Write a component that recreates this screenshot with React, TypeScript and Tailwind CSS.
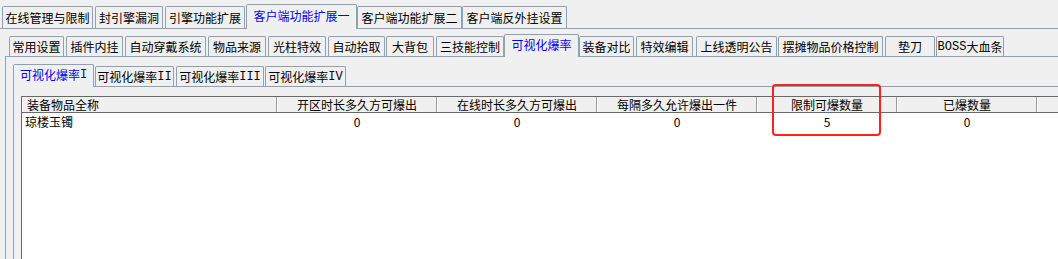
import React from "react";

const B = "border-[#8da1b3]";

type T = { label: React.ReactNode; key: string; w: number; ml: number; active?: boolean };

const Lat = ({ children }: { children: React.ReactNode }) => (
  <span className="text-[12px]" style={{ fontFamily: '"Liberation Mono", monospace' }}>
    {children}
  </span>
);

const row1: T[] = [
  { key: "a", label: "在线管理与限制", w: 91, ml: 2 },
  { key: "b", label: "封引擎漏洞", w: 68, ml: 2 },
  { key: "c", label: "引擎功能扩展", w: 80, ml: 2 },
  { key: "d", label: "客户端功能扩展一", w: 111, ml: 1, active: true },
  { key: "e", label: "客户端功能扩展二", w: 105, ml: 0 },
  { key: "f", label: "客户端反外挂设置", w: 105, ml: 0 },
];

const row2: T[] = [
  { key: "1", label: "常用设置", w: 55, ml: 4 },
  { key: "2", label: "插件内挂", w: 57, ml: 2 },
  { key: "3", label: "自动穿戴系统", w: 81, ml: 2 },
  { key: "4", label: "物品来源", w: 58, ml: 2 },
  { key: "5", label: "光柱特效", w: 58, ml: 2 },
  { key: "6", label: "自动拾取", w: 57, ml: 2 },
  { key: "7", label: "大背包", w: 48, ml: 1 },
  { key: "8", label: "三技能控制", w: 68, ml: 2 },
  { key: "9", label: "可视化爆率", w: 75, ml: 0, active: true },
  { key: "10", label: "装备对比", w: 55, ml: 0 },
  { key: "11", label: "特效编辑", w: 57, ml: 2 },
  { key: "12", label: "上线透明公告", w: 81, ml: 3 },
  { key: "13", label: "摆摊物品价格控制", w: 105, ml: 1 },
  { key: "14", label: "垫刀", w: 50, ml: 2 },
  {
    key: "15",
    label: (
      <>
        <Lat>BOSS</Lat>大血条
      </>
    ),
    w: 68,
    ml: 1,
  },
];

const row3: T[] = [
  { key: "r1", label: <>可视化爆率<Lat>I</Lat></>, w: 81, ml: 0, active: true },
  { key: "r2", label: <>可视化爆率<Lat>II</Lat></>, w: 79, ml: 1 },
  { key: "r3", label: <>可视化爆率<Lat>III</Lat></>, w: 88, ml: 2 },
  { key: "r4", label: <>可视化爆率<Lat>IV</Lat></>, w: 81, ml: 1 },
];

function Tab({ t, h }: { t: T; h: number }) {
  if (t.active) {
    return (
      <div
        style={{ width: t.w, marginLeft: t.ml, height: h + 3 }}
        className={`relative z-10 -mb-px flex shrink-0 items-center justify-center whitespace-nowrap rounded-t-[2px] border border-b-0 ${B} bg-[#f0f0f0] pb-[2px] text-[#0000ff]`}
      >
        {t.label}
      </div>
    );
  }
  return (
    <div
      style={{ width: t.w, marginLeft: t.ml, height: h }}
      className={`flex shrink-0 items-center justify-center whitespace-nowrap rounded-t-[2px] border border-b-0 ${B} bg-[#f0f0f0] text-black`}
    >
      {t.label}
    </div>
  );
}

const cols = [
  { label: "装备物品全称", w: 255, left: true, v: "琼楼玉镯" },
  { label: "开区时长多久方可爆出", w: 160, v: "0" },
  { label: "在线时长多久方可爆出", w: 160, v: "0" },
  { label: "每隔多久允许爆出一件", w: 160, v: "0" },
  { label: "限制可爆数量", w: 140, v: "5" },
  { label: "已爆数量", w: 140, v: "0" },
  { label: "", w: 40, v: "" },
];

export default function App() {
  return (
    <div
      className="relative flex h-[259px] w-[1058px] flex-col overflow-hidden bg-[#f0f0f0] text-[12px] leading-[14px] text-black"
      style={{ fontFamily: '"Noto Sans CJK SC", "Noto Sans", sans-serif' }}
    >
      {/* Row 1 */}
      <div className={`flex h-[29px] shrink-0 items-end border-b ${B}`}>
        {row1.map((t) => (
          <Tab key={t.key} t={t} h={22} />
        ))}
      </div>

      {/* Row 2 */}
      <div className={`ml-[5px] flex h-[28px] shrink-0 items-end border-b ${B}`}>
        {row2.map((t) => (
          <Tab key={t.key} t={t} h={20} />
        ))}
      </div>

      {/* Panel 2 */}
      <div className={`ml-[5px] flex flex-1 flex-col border-l ${B} pl-[7px]`}>
        {/* Row 3 */}
        <div className={`flex h-[30px] shrink-0 items-end border-b ${B}`}>
          {row3.map((t) => (
            <Tab key={t.key} t={t} h={20} />
          ))}
        </div>
        {/* Panel 3 */}
        <div className={`flex flex-1 flex-col border-l ${B} pl-[7px] pt-[9px]`}>
          <div className="flex flex-1 flex-col border-l border-t border-[#696969] bg-white">
            <div className="flex h-[16px] shrink-0 border-b border-[#696969] bg-[#f0f0f0]">
              {cols.map((c, i) => (
                <div
                  key={i}
                  style={{ width: c.w }}
                  className={`flex shrink-0 items-center whitespace-nowrap border-l border-r border-l-white border-r-[#9a9a9a] ${
                    c.left ? "justify-start pl-[4px]" : "justify-center"
                  }`}
                >
                  {c.label}
                </div>
              ))}
            </div>
            <div className="flex h-[18px] shrink-0">
              {cols.map((c, i) => (
                <div
                  key={i}
                  style={{ width: c.w }}
                  className={`flex shrink-0 items-center whitespace-nowrap border-l border-r border-transparent ${
                    c.left ? "justify-start pl-[2px]" : "justify-center"
                  }`}
                >
                  {c.v}
                </div>
              ))}
            </div>
          </div>
        </div>
      </div>

      {/* Red highlight */}
      <div className="absolute left-[772px] top-[84px] h-[52px] w-[109px] rounded-[4px] border-2 border-[#ff2020]" />
    </div>
  );
}
